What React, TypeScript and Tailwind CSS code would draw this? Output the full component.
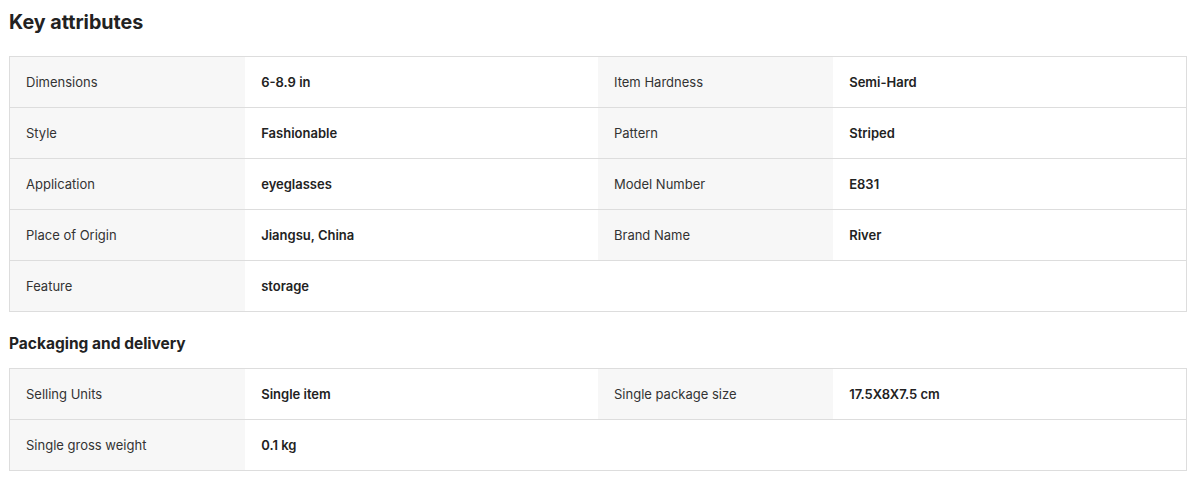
import React from 'react';

type Attr = {label: string; value: string};

const keyAttributes: Attr[] = [
    {label: 'Dimensions', value: '6-8.9 in'},
    {label: 'Item Hardness', value: 'Semi-Hard'},
    {label: 'Style', value: 'Fashionable'},
    {label: 'Pattern', value: 'Striped'},
    {label: 'Application', value: 'eyeglasses'},
    {label: 'Model Number', value: 'E831'},
    {label: 'Place of Origin', value: 'Jiangsu, China'},
    {label: 'Brand Name', value: 'River'},
    {label: 'Feature', value: 'storage'},
];

const packaging: Attr[] = [
    {label: 'Selling Units', value: 'Single item'},
    {label: 'Single package size', value: '17.5X8X7.5 cm'},
    {label: 'Single gross weight', value: '0.1 kg'},
];

// two attribute pairs per row
const toRows = (items: Attr[]) => {
    const rows: Attr[][] = [];
    for (let i = 0; i < items.length; i += 2) rows.push(items.slice(i, i + 2));
    return rows;
};

const Pair = ({item}: {item?: Attr}) => {
    if (!item) {
        return (
            <>
                <div/>
                <div/>
            </>
        );
    }
    return (
        <>
            <div className="flex items-center px-4 pt-[2px] bg-[#f7f7f7] text-[#333] font-normal">{item.label}</div>
            <div className="flex items-center px-4 pt-[2px] text-[#222] font-semibold">{item.value}</div>
        </>
    );
};

const AttrTable = ({items}: {items: Attr[]}) => (
    <div className="border border-[#dddddd]">
        {toRows(items).map((row, i, all) => (
            <div
                key={i}
                className={`grid grid-cols-[20%_30%_20%_30%] text-[13px] ${i < all.length - 1 ? 'h-[51px] border-b border-[#dddddd]' : 'h-[50px]'}`}
            >
                <Pair item={row[0]}/>
                <Pair item={row[1]}/>
            </div>
        ))}
    </div>
);

export default function App() {
    return (
        <div className="w-[1196px] h-[488px] bg-white px-[9px] pt-2 font-['Inter',sans-serif] text-[#222]">
            <h2 className="text-[19.7px] leading-7 font-bold mb-5">Key attributes</h2>
            <AttrTable items={keyAttributes}/>
            <h3 className="text-[15.5px] leading-6 font-bold mt-5 mb-3">Packaging and delivery</h3>
            <AttrTable items={packaging}/>
        </div>
    );
}
